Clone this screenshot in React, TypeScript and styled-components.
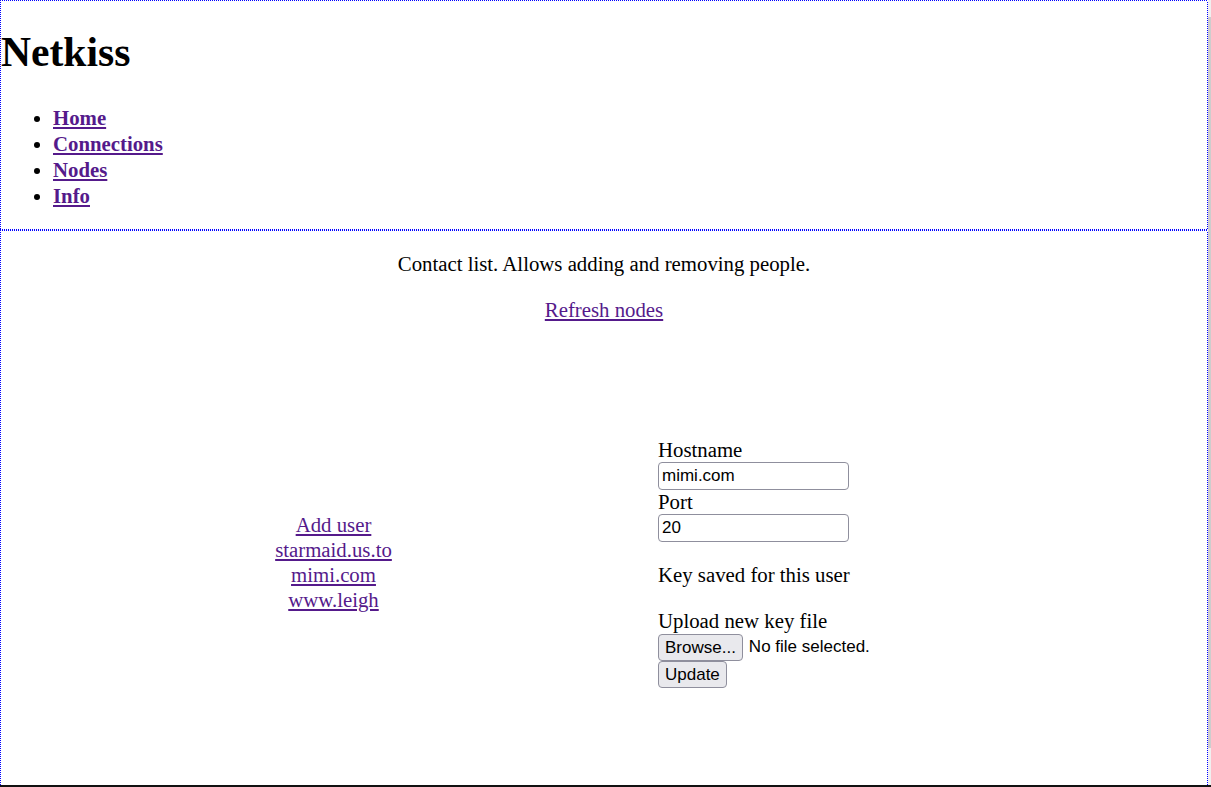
import React from "react";
import styled, { createGlobalStyle, css } from "styled-components";

const Global = createGlobalStyle`
  html, body { margin: 0; padding: 0; background: #fff; }
  body { font-family: "Liberation Serif", "Times New Roman", serif; font-size: 20.8px; color: #000; }
  #root { width: 1211px; height: 787px; overflow: hidden; }
`;

const dotH = "repeating-linear-gradient(90deg, #0000ff 0 1px, #ffffff 1px 2px)";
const dotV = "repeating-linear-gradient(180deg, #0000ff 0 1px, #ffffff 1px 2px)";

const frameLines = (top: boolean, bottom: boolean) => css`
  padding: 0 1px ${bottom ? 1 : 0}px 1px;
  background:
    ${top ? `${dotH} left top / 100% 1px no-repeat,` : ""}
    ${bottom ? `${dotH} left bottom / 100% 1px no-repeat,` : ""}
    ${dotV} left top / 1px 100% no-repeat,
    ${dotV} right top / 1px 100% no-repeat,
    #ffffff;
`;

const Page = styled.div`
  width: 1211px;
  height: 787px;
  display: flex;
  flex-direction: column;
`;

const Body = styled.div`
  flex: 1;
  display: flex;
  min-height: 0;
`;

const Frames = styled.div`
  width: 1208px;
  display: flex;
  flex-direction: column;
`;

const ScrollStrip = styled.div`
  width: 3px;
  background: #f0f0f0;
  padding: 17px 0 37px;
  box-sizing: border-box;
  display: flex;
`;

const Thumb = styled.div`
  flex: 1;
  background: #cdcdcd;
`;

const BottomRule = styled.div`
  height: 2px;
  background: #111;
`;

const Header = styled.header`
  ${frameLines(true, true)}
  padding-top: 1px;
  box-sizing: border-box;
  height: 230px;
  display: flow-root;
`;

const Title = styled.h1`
  margin: 28px 0 0;
  font-size: 41.6px;
  line-height: 47.8px;
  font-weight: bold;
`;

const Nav = styled.ul`
  margin: 28px 0 0;
  padding-left: 52px;
  list-style: disc;
`;

const NavItem = styled.li`
  line-height: 26px;
  font-weight: bold;
`;

const Link = styled.a`
  color: #551a8b;
  text-decoration: underline;
  cursor: pointer;
`;

const Main = styled.main`
  ${frameLines(true, false)}
  flex: 1;
  box-sizing: border-box;
  text-align: center;
  overflow: hidden;
  display: flow-root;
`;

const Para = styled.p`
  margin: 20.8px 0;
  line-height: 25px;
`;

const Layout = styled.div`
  margin-top: 116px;
  display: grid;
  grid-template-columns: 657px 1fr;
  align-items: center;
  text-align: left;
`;

const UserList = styled.div`
  padding-left: 8px;
  padding-bottom: 2px;
  display: flex;
  flex-direction: column;
  align-items: center;
  line-height: 25px;
`;

const EditForm = styled.form`
  display: flex;
  flex-direction: column;
  align-items: flex-start;
  line-height: 24px;
`;

const Label = styled.label`
  display: block;
  line-height: 24px;
`;

const TextInput = styled.input`
  box-sizing: border-box;
  width: 191px;
  height: 28px;
  margin: 0;
  padding: 0 3px;
  border: 1px solid #8f8f9d;
  border-radius: 4px;
  font-family: "Liberation Sans", Arial, sans-serif;
  font-size: 17px;
  color: #000;
  background: #fff;
`;

const Note = styled.p`
  margin: 20.8px 0 0;
  line-height: 25px;
`;

const FileRow = styled.div`
  display: flex;
  align-items: center;
  gap: 6px;
  height: 28px;
  font-family: "Liberation Sans", Arial, sans-serif;
  font-size: 17px;
`;

const Button = styled.button`
  box-sizing: border-box;
  height: 27px;
  margin: 0;
  padding: 0 6px;
  border: 1px solid #8f8f9d;
  border-radius: 4px;
  background: #e9e9ed;
  font-family: "Liberation Sans", Arial, sans-serif;
  font-size: 17px;
  color: #000;
  line-height: 25px;
`;

export default function App() {
  return (
    <>
      <Global />
      <Page>
        <Body>
          <Frames>
            <Header>
              <Title>Netkiss</Title>
              <Nav>
                <NavItem><Link>Home</Link></NavItem>
                <NavItem><Link>Connections</Link></NavItem>
                <NavItem><Link>Nodes</Link></NavItem>
                <NavItem><Link>Info</Link></NavItem>
              </Nav>
            </Header>
            <Main>
              <Para>Contact list. Allows adding and removing people.</Para>
              <Para><Link>Refresh nodes</Link></Para>
              <Layout>
                <UserList>
                  <Link>Add user</Link>
                  <Link>starmaid.us.to</Link>
                  <Link>mimi.com</Link>
                  <Link>www.leigh</Link>
                </UserList>
                <EditForm onSubmit={(e) => e.preventDefault()}>
                  <Label htmlFor="host">Hostname</Label>
                  <TextInput id="host" defaultValue="mimi.com" />
                  <Label htmlFor="port">Port</Label>
                  <TextInput id="port" defaultValue="20" />
                  <Note>Key saved for this user</Note>
                  <Note>Upload new key file</Note>
                  <FileRow>
                    <Button type="button">Browse...</Button>
                    <span>No file selected.</span>
                  </FileRow>
                  <Button type="submit">Update</Button>
                </EditForm>
              </Layout>
            </Main>
          </Frames>
          <ScrollStrip><Thumb /></ScrollStrip>
        </Body>
        <BottomRule />
      </Page>
    </>
  );
}
